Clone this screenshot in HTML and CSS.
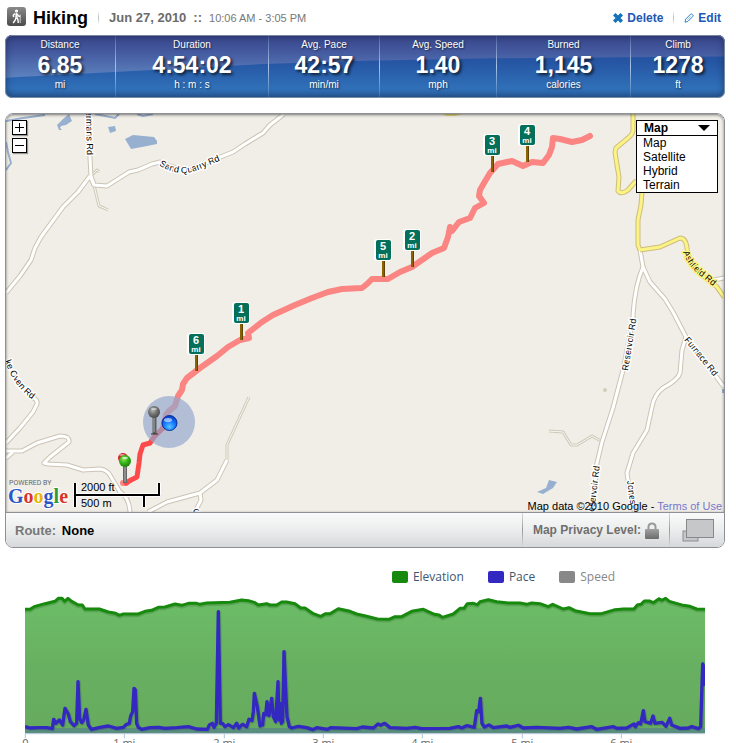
FILE: index.html
```html
<!DOCTYPE html>
<html lang="en">
<head>
<meta charset="utf-8">
<meta name="viewport" content="width=device-width, initial-scale=1">
<title>Hiking - Jun 27, 2010</title>
<link rel="stylesheet" href="styles.css">
</head>
<body>
<main class="page">
  <header class="header">
    <svg class="sport-icon" viewBox="0 0 19 19" aria-hidden="true">
      <defs><linearGradient id="sport" x1="0" y1="0" x2="0" y2="1"><stop offset="0" stop-color="#8a8a8a"/><stop offset="1" stop-color="#4b4b4d"/></linearGradient></defs>
      <rect width="19" height="19" rx="3" fill="url(#sport)"/>
      <circle cx="9.5" cy="4" r="1.6" fill="#fff"/>
      <path d="M8.6 6 L10.4 6 L10.6 10.5 L8.3 10.8 Z" fill="#fff"/>
      <path d="M8 6.6 L6.3 8.2 L6.6 10.2" fill="none" stroke="#fff" stroke-width="1.5"/>
      <path d="M9 10.5 L8.3 13 L6.2 16 M10 10.2 L11 13 L11.3 16 M10.3 7 L11.4 9 L13.2 9.2" fill="none" stroke="#fff" stroke-width="1.4"/>
      <path d="M13.2 7.5 L13.2 16" stroke="#fff" stroke-width=".7"/>
    </svg>
    <h1 class="title">Hiking</h1>
    <span class="divider"></span>
    <span class="date">Jun 27, 2010</span>
    <span class="dots">::</span>
    <span class="time">10:06 AM - 3:05 PM</span>
    <nav class="actions">
      <a class="action" href="#delete">
        <svg class="action-icon" viewBox="0 0 10 10" aria-hidden="true"><path d="M2.5 2.5 L7.5 7.5 M7.5 2.5 L2.5 7.5" stroke="#1673b9" stroke-width="3.6" stroke-linecap="square"/></svg>
        Delete
      </a>
      <span class="divider"></span>
      <a class="action" href="#edit">
        <svg class="action-icon" viewBox="0 0 10 10" aria-hidden="true"><path d="M1 9.2 L1.6 6.2 L6.7 1.1 Q7.4 .5 8.2 1.3 L8.9 2 Q9.5 2.8 8.9 3.4 L3.8 8.5 Z" fill="#fff" stroke="#2a83c4"/><path d="M3.4 6.8 L6.9 3.3" stroke="#8fc0e2"/></svg>
        Edit
      </a>
    </nav>
  </header>

  <dl class="stats">
    <div class="stat"><dt>Distance</dt><dd class="value">6.85</dd><dd>mi</dd></div>
    <div class="stat"><dt>Duration</dt><dd class="value">4:54:02</dd><dd>h : m : s</dd></div>
    <div class="stat"><dt>Avg. Pace</dt><dd class="value">42:57</dd><dd>min/mi</dd></div>
    <div class="stat"><dt>Avg. Speed</dt><dd class="value">1.40</dd><dd>mph</dd></div>
    <div class="stat"><dt>Burned</dt><dd class="value">1,145</dd><dd>calories</dd></div>
    <div class="stat"><dt>Climb</dt><dd class="value">1278</dd><dd>ft</dd></div>
  </dl>

  <section class="map-card">
    <div class="map">
      <svg class="map-canvas" viewBox="6 114 718 398" preserveAspectRatio="xMidYMid slice" role="img" aria-label="Route map">
        <defs>
          <radialGradient id="blue" cx=".5" cy=".75" r=".75"><stop offset="0" stop-color="#55c8ff"/><stop offset=".5" stop-color="#1878ff"/><stop offset="1" stop-color="#0638c0"/></radialGradient>
          <radialGradient id="green" cx=".4" cy=".35" r=".7"><stop offset="0" stop-color="#8fe25c"/><stop offset=".5" stop-color="#35b516"/><stop offset="1" stop-color="#1c7a0c"/></radialGradient>
          <radialGradient id="gray" cx=".4" cy=".35" r=".7"><stop offset="0" stop-color="#b5b5b5"/><stop offset=".5" stop-color="#717171"/><stop offset="1" stop-color="#484848"/></radialGradient>
          <g id="sign">
            <rect x="-1" y="-16" width="3" height="16" fill="#8a6400"/><path d="M1.5 -16 V0" stroke="#5e4400"/>
            <rect x="-9" y="-38" width="18" height="22" rx="3" fill="#fff"/>
            <rect x="-7" y="-37" width="15" height="20" rx="2" fill="#04705a"/>
          </g>
          <path id="r-hermans" d="M88 114 L90 158 L91 176 L94 185"/>
          <path id="r-sand" d="M90 176 L94 185 L107 186 L118 179 L129 172 L138 170 L152 164 L160 162 Q173 168 185 170 Q200 166 218 158 L233 152 L245 144 L263 133 L270 125 L284 114"/>
          <path id="r-west" d="M6 293 L20 276 L31 260 L35 248 L41 237 L63 207 L78 192 L90 176"/>
          <path id="r-yellow" d="M633 114 V130 Q633 134 628 138 L616 148 L615 152 L617 165 L619 177 L618 191 Q621 195 628 190 L635 182 L642 180 L642 192 L641 205 L638 220 L638 245 L640 250"/>
          <path id="r-ashfield" d="M640 250 L660 247 L680 238 Q686 238 687 248 Q689 262 697 271 L717 287 L724 297"/>
          <path id="r-reservoir" d="M640 250 L643 267 Q635 285 633 315 L633 320 L623 370 L613 408 L602 442 L597 463 L592 514"/>
          <path id="r-furnace" d="M643 267 L650 282 L665 299 L673 312 L686 337 L715 375 L724 387"/>
          <path id="r-jones" d="M686 337 L682 350 L680 373 Q678 380 663 388 Q654 395 652 407 L647 430 L633 453 L627 473 L629 487 L635 514"/>
          <path id="r-oven" d="M31 397 Q38 399 37 404 L33 412 L20 428 L6 443"/>
          <path id="r-south" d="M6 451 H22 L37 443 L60 436 Q70 436 69 442 L50 457 L44 463 L48 464 L67 465 L83 470 L100 469 Q108 470 111 477 L120 492 Q130 498 130 514"/>
          <path id="r-south2" d="M6 458 L13 452 M148 512 L167 502 L200 493 L217 480 L227 460 M200 493 L201 500 L196 510"/>
          <path id="t-hermans" d="M86 111 L87 162"/>
          <path id="t-sand" d="M159 165 Q179 178 198 170 L226 158"/>
          <path id="t-ashfield" d="M683 252 Q689 268 702 277 L724 295"/>
          <path id="t-res1" d="M628 371 L637 315"/>
          <path id="t-res2" d="M594 512 L601 456"/>
          <path id="t-furnace" d="M684 340 L719 383"/>
          <path id="t-jones" d="M627 481 L632 516"/>
          <path id="t-oven" d="M5 361 Q14 388 36 402"/>
        </defs>
        <rect x="6" y="114" width="718" height="398" fill="#f1eee8"/>

        <g fill="#98b0cf">
          <path d="M57 125 L63 119 L69 114 L72 121 L66 125 L61 126 L60 128 L62 130 L59 130 Z"/>
          <path d="M108 127 L115 126 L116 131 L110 133 Z"/>
          <path d="M125 139 L133 135 L154 137 L157 141 L157 144 L142 147 L131 149 Z"/>
          <path d="M537 492 L546 488 L549 480 L557 482 L553 488 L543 494 Z"/>
          <path d="M722 389 H724 V393 H722 Z"/>
        </g>
        <g fill="none" stroke="#98b0cf" stroke-width="2">
          <path d="M6 121 L23 118 L45 115 M95 114 L115 118 L119 114 M137 114 L143 116 L153 114 M6 142 L8 152 L11 163 L6 170"/>
        </g>
        <path d="M442 114 L447 116 L455 116 L463 114 Z" fill="#e3d877"/>
        <circle cx="605" cy="390" r="2" fill="#d0cdbd"/>

        <g fill="none" stroke-linejoin="round">
          <g stroke="#cfc9b9" stroke-width="3">
            <path d="M94 185 L97 198 L99 206 L104 208 L108 210 M91 176 L97 170 L99 172 M549 431 L563 432 L571 445 L577 445 L592 436 L601 441 M227 460 L227 445 L249 397"/>
          </g>
          <g stroke="#f8f7f2" stroke-width="1">
            <path d="M94 185 L97 198 L99 206 L104 208 L108 210 M91 176 L97 170 L99 172 M549 431 L563 432 L571 445 L577 445 L592 436 L601 441 M227 460 L227 445 L249 397"/>
          </g>
          <g stroke="#cbc4b3" stroke-width="5">
            <use href="#r-hermans"/><use href="#r-sand"/><use href="#r-west"/><use href="#r-reservoir"/><use href="#r-furnace"/><use href="#r-jones"/><use href="#r-oven"/><use href="#r-south"/><use href="#r-south2"/><path d="M714 280 L724 278"/>
          </g>
          <g stroke="#fff" stroke-width="3">
            <use href="#r-hermans"/><use href="#r-sand"/><use href="#r-west"/><use href="#r-reservoir"/><use href="#r-furnace"/><use href="#r-jones"/><use href="#r-oven"/><use href="#r-south"/><use href="#r-south2"/><path d="M714 280 L724 278"/>
          </g>
          <g stroke="#cdbd7f" stroke-width="5"><use href="#r-yellow"/><use href="#r-ashfield"/></g>
          <g stroke="#fbf484" stroke-width="3"><use href="#r-yellow"/><use href="#r-ashfield"/></g>
        </g>

        <g class="road-label">
          <text><textPath href="#t-hermans">ermans Rd</textPath></text>
          <text><textPath href="#t-sand">Sand Quarry Rd</textPath></text>
          <text class="road-label-yellow"><textPath href="#t-ashfield">Ashfield Rd</textPath></text>
          <text><textPath href="#t-res1">Reservoir Rd</textPath></text>
          <text><textPath href="#t-res2">eservoir Rd</textPath></text>
          <text><textPath href="#t-furnace">Furnace Rd</textPath></text>
          <text><textPath href="#t-jones">Jones</textPath></text>
          <text><textPath href="#t-oven">ke Oven Rd</textPath></text>
          <text x="193" y="515">C</text>
        </g>

        <g fill="none" stroke-linecap="round" stroke-linejoin="round">
          <path d="M163 428 L166 415 L169 411 L175 406 L178 396 L182 390 L183 384 L187 378 L200 368 L217 356 L228 347 L240 340 L249 338 L248 333 L262 322 L273 315 L295 305 L312 298 L328 292 L342 289 L362 288 L367 284 L372 279 L388 279 L400 272 L412 267 L422 260 L432 253 L444 248 L448 237 L450 227 L452 231 L459 222 L470 218 L475 208 L484 203 L479 196 L480 190 L484 183 L490 173 L498 164 L512 161 L523 166 L532 162 L543 163 L549 155 L552 147 L553 138 L560 139 L572 142 L582 140 L590 136" stroke="#fa8583" stroke-width="6"/>
          <path d="M123 483 H126" stroke="#fa8583" stroke-width="6"/>
          <path d="M126 483 L131 480 L137 477 L139 463 L140 454 L143 445 L150 443 L154 437 L163 428" stroke="#fc4a4a" stroke-width="5"/>
        </g>
        <circle cx="169" cy="422" r="26" fill="#92a7cc" fill-opacity=".68"/>
        <path d="M154.500 416 V434" stroke="#5e5e5e" stroke-width="4"/><path d="M154 416 V432" stroke="#aaa" stroke-width="1"/>
        <path d="M151 434 H158" stroke="#333" stroke-width="1"/>
        <circle cx="154" cy="412" r="6" fill="url(#gray)"/><ellipse cx="154" cy="409" rx="3" ry="1" fill="#fff" opacity=".5"/>
        <circle cx="169.500" cy="423" r="7.500" fill="url(#blue)" stroke="#082e9c"/><ellipse cx="168" cy="420" rx="4" ry="2" fill="#fff" opacity=".55"/>
        <circle cx="123" cy="458" r="5" fill="#d2232a"/><ellipse cx="122" cy="455" rx="3" ry="1" fill="#fff" opacity=".5"/>
        <path d="M125 464 V483" stroke="#666" stroke-width="4"/><path d="M125 466 V482" stroke="#b5b5b5" stroke-width="1"/>
        <circle cx="125" cy="461" r="6" fill="url(#green)"/><ellipse cx="125" cy="458" rx="3" ry="1" fill="#fff" opacity=".7"/>

        <g class="sign">
          <g transform="translate(196 371)"><use href="#sign"/><text class="num" y="-27">6</text><text y="-19">mi</text></g>
          <g transform="translate(241 340)"><use href="#sign"/><text class="num" y="-27">1</text><text y="-19">mi</text></g>
          <g transform="translate(383 277)"><use href="#sign"/><text class="num" y="-27">5</text><text y="-19">mi</text></g>
          <g transform="translate(412 267)"><use href="#sign"/><text class="num" y="-27">2</text><text y="-19">mi</text></g>
          <g transform="translate(492 172)"><use href="#sign"/><text class="num" y="-27">3</text><text y="-19">mi</text></g>
          <g transform="translate(527 162)"><use href="#sign"/><text class="num" y="-27">4</text><text y="-19">mi</text></g>
        </g>

        <text class="powered" x="9" y="485">POWERED BY</text>
        <text class="google" x="8" y="503"><tspan fill="#2a56c6">G</tspan><tspan fill="#d9342b">o</tspan><tspan fill="#e8b500">o</tspan><tspan fill="#2a56c6">g</tspan><tspan fill="#2f9a3c">l</tspan><tspan fill="#d9342b">e</tspan></text>
        <path d="M75 483 V507 M75 495 H160 M159 483 V495 M144 495 V507" fill="none" stroke="#fff" stroke-width="4"/>
        <path d="M75 483 V507 M75 495 H160 M159 483 V495 M144 495 V507" fill="none" stroke="#000" stroke-width="2"/>
        <text class="scale" x="81" y="491">2000 ft</text>
        <text class="scale" x="81" y="507">500 m</text>
      </svg>
      <div class="zoom">
        <button class="zoom-button" type="button" aria-label="Zoom in"><svg viewBox="0 0 13 13"><path d="M2 6.500 H11 M6.500 2 V11" stroke="#000"/></svg></button>
        <button class="zoom-button" type="button" aria-label="Zoom out"><svg viewBox="0 0 13 13"><path d="M2 6.500 H11" stroke="#000"/></svg></button>
      </div>
      <div class="map-type">
        <button class="map-type-current" type="button" aria-expanded="true">Map<span class="caret"></span></button>
        <div class="map-type-list">
          <button type="button">Map</button>
          <button type="button">Satellite</button>
          <button type="button">Hybrid</button>
          <button type="button">Terrain</button>
        </div>
      </div>
      <p class="attribution">Map data ©2010 Google - <a href="#terms">Terms of Use</a></p>
    </div>
    <footer class="map-footer">
      <p class="route"><span class="muted">Route:</span> <strong>None</strong></p>
      <div class="privacy">
        <span>Map Privacy Level:</span>
        <svg class="lock" viewBox="0 0 14 17" aria-hidden="true">
          <defs><linearGradient id="lock" x1="0" y1="0" x2="0" y2="1"><stop offset="0" stop-color="#a0a0a0"/><stop offset="1" stop-color="#6c6c6c"/></linearGradient></defs>
          <path d="M3.500 8 V5 Q3.500 1.500 7 1.500 Q10.500 1.500 10.500 5 V8" fill="none" stroke="#999" stroke-width="2"/>
          <rect y="7" width="14" height="10" rx="1" fill="url(#lock)"/>
        </svg>
      </div>
      <button class="resize" type="button" aria-label="Enlarge map">
        <svg viewBox="0 0 32 23"><rect x="1" y="12" width="15" height="10" fill="#c6c7c9" stroke="#8b8d90"/><rect x="4.500" y=".5" width="27" height="18" fill="#c6c7c9" stroke="#85878a"/></svg>
      </button>
    </footer>
  </section>

  <section class="chart">
    <div class="legend">
      <button type="button"><span class="swatch elevation"></span>Elevation</button>
      <button type="button"><span class="swatch pace"></span>Pace</button>
      <button type="button" class="off"><span class="swatch speed"></span>Speed</button>
    </div>
    <svg class="plot" viewBox="15 90 2160 480" role="img" aria-label="Elevation and pace by distance">
      <defs>
        <linearGradient id="hill" x1="0" y1="0" x2="0" y2="1"><stop offset="0" stop-color="#6cbd67"/><stop offset=".5" stop-color="#68b061"/><stop offset="1" stop-color="#66ab5e"/></linearGradient>
        <clipPath id="plot-area"><rect x="75" y="90" width="2040" height="430"/></clipPath>
        <path id="elev" d="M75 148 L90 148 105 139 135 131 165 124 175 115 186 115 194 124 204 115 215 124 235 135 247 135 255 147 298 147 325 156 347 160 358 166 370 162 415 162 435 154 455 151 475 142 495 141 525 132 545 136 565 130 590 130 600 133 620 129 690 127 725 120 745 122 765 128 775 135 800 131 810 135 830 135 845 126 860 126 885 131 902 144 915 144 940 161 962 169 977 161 990 161 1015 146 1050 154 1070 162 1100 169 1132 177 1167 178 1185 170 1205 170 1235 154 1270 148 1303 163 1317 165 1327 172 1360 162 1380 145 1392 145 1402 131 1420 130 1432 134 1440 125 1465 119 1490 125 1525 129 1560 129 1580 133 1595 129 1620 131 1645 140 1658 133 1690 147 1707 143 1725 152 1770 161 1805 161 1845 149 1870 147 1902 147 1912 135 1923 133 1933 123 1948 123 1960 128 1977 116 1985 121 1997 115 2008 124 2050 136 2070 139 2090 147 2115 148"/>
        <path id="pace" d="M75 500 L90 504 115 503 140 503 157 506 161 478 168 490 178 480 188 495 195 445 205 462 211 485 222 497 230 490 234 365 239 475 245 488 251 480 258 448 265 495 274 508 300 502 325 498 350 505 370 502 378 494 388 490 392 468 398 455 402 385 406 390 410 490 415 502 425 508 450 503 475 502 495 505 530 503 565 500 590 507 622 508 628 495 637 490 642 502 649 490 655 155 661 490 667 490 675 500 685 494 700 503 710 490 716 504 727 493 740 500 747 478 756 482 760 455 763 400 772 440 780 498 788 495 791 460 797 465 801 425 807 467 815 415 820 470 827 485 834 365 837 480 840 430 844 490 848 485 852 275 858 410 861 470 868 500 875 504 895 499 920 503 938 509 950 503 982 508 992 503 1070 506 1087 501 1120 504 1134 492 1142 496 1154 490 1170 503 1220 505 1245 502 1265 506 1350 505 1375 500 1385 504 1400 497 1423 502 1430 452 1436 455 1441 415 1446 490 1453 501 1467 495 1480 503 1520 498 1530 502 1555 496 1570 504 1610 502 1680 505 1705 502 1730 507 1775 500 1790 508 1840 500 1850 505 1880 504 1902 492 1906 500 1915 488 1922 492 1930 452 1935 485 1952 490 1959 468 1965 490 1986 487 1998 499 2009 475 2015 495 2040 505 2065 504 2075 500 2095 506 2102 500 2108 312 2114 325 2115 378"/>
      </defs>
      <g clip-path="url(#plot-area)" stroke-linejoin="round">
        <path d="M75 148 L90 148 105 139 135 131 165 124 175 115 186 115 194 124 204 115 215 124 235 135 247 135 255 147 298 147 325 156 347 160 358 166 370 162 415 162 435 154 455 151 475 142 495 141 525 132 545 136 565 130 590 130 600 133 620 129 690 127 725 120 745 122 765 128 775 135 800 131 810 135 830 135 845 126 860 126 885 131 902 144 915 144 940 161 962 169 977 161 990 161 1015 146 1050 154 1070 162 1100 169 1132 177 1167 178 1185 170 1205 170 1235 154 1270 148 1303 163 1317 165 1327 172 1360 162 1380 145 1392 145 1402 131 1420 130 1432 134 1440 125 1465 119 1490 125 1525 129 1560 129 1580 133 1595 129 1620 131 1645 140 1658 133 1690 147 1707 143 1725 152 1770 161 1805 161 1845 149 1870 147 1902 147 1912 135 1923 133 1933 123 1948 123 1960 128 1977 116 1985 121 1997 115 2008 124 2050 136 2070 139 2090 147 2115 148 V520 H75 Z" fill="url(#hill)"/>
        <rect x="75" y="504" width="2040" height="16" fill="#5a8f80"/>
        <g fill="none">
          <use href="#elev" stroke="#1b4d14" stroke-opacity=".2" stroke-width="13" y="3"/>
          <use href="#elev" stroke="#178a0e" stroke-width="9"/>
          <use href="#pace" stroke="#1c2c50" stroke-opacity=".2" stroke-width="13" x="2" y="2"/>
          <use href="#pace" stroke="#3329c0" stroke-width="10"/>
        </g>
      </g>
      <path d="M75 521 H2115 M76 521 V535 M373 521 V535 M673 521 V535 M970 521 V535 M1267 521 V535 M1567 521 V535 M1864 521 V535" fill="none" stroke="#b3c4d9" stroke-width="3"/>
      <g class="axis">
        <text x="76" y="562">0</text>
        <text x="373" y="562">1 mi</text>
        <text x="673" y="562">2 mi</text>
        <text x="970" y="562">3 mi</text>
        <text x="1267" y="562">4 mi</text>
        <text x="1567" y="562">5 mi</text>
        <text x="1864" y="562">6 mi</text>
      </g>
    </svg>
  </section>
</main>
</body>
</html>
```

FILE: styles.css
```css
* { box-sizing: border-box; }

body {
  margin: 0;
  height: 100vh;
  overflow: hidden;
  background: #fff;
  color: #000;
  font-family: "Liberation Sans", Arial, sans-serif;
  font-size: 12px;
}

h1, p, dl, dd { margin: 0; }

button {
  margin: 0;
  padding: 0;
  border: 0;
  background: none;
  color: inherit;
  font: inherit;
  cursor: pointer;
}

svg { display: block; }

.page { padding: 0 11px 0 5px; }

/* Header */
.header {
  display: flex;
  align-items: center;
  height: 35px;
  padding: 0 4px 0 2px;
}

.sport-icon { width: 19px; height: 19px; margin: 0 7px 2px 0; }
.title { font-size: 18px; line-height: 20px; }

.divider {
  width: 1px;
  height: 14px;
  margin: 0 10px;
  background: linear-gradient(#fff, #bbb, #fff);
}

.date, .dots { color: #6b6b6b; font-size: 13px; font-weight: bold; }
.dots { margin: 0 7px; }
.time { color: #777; font-size: 11px; }
.actions { display: flex; align-items: center; margin-left: auto; }

.action {
  display: flex;
  align-items: center;
  gap: 4px;
  color: #2058b4;
  font-weight: bold;
  text-decoration: none;
}

.action-icon { width: 10px; height: 10px; }

/* Stats bar */
.stats {
  position: relative;
  display: grid;
  grid-template-columns: 110fr 153fr 111fr 117fr 134fr 95fr;
  overflow: hidden;
  border-radius: 7px;
  background: linear-gradient(#1f4a97, #2554a2 40%, #3070b8 85%, #2b62a4);
  color: #fff;
  text-align: center;
}

.stats::before,
.stats::after {
  content: "";
  position: absolute;
  inset: 0;
}

.stats::before {
  background: linear-gradient(#38458a, #43589e 25%, #5c80bd 65%);
  clip-path: polygon(0 0, 100% 0, 100% 34%, 68% 37%, 50% 41%, 36% 46%, 0 68%);
}

.stats::after {
  border-radius: 7px;
  border: 1px solid rgba(140, 150, 165, .8);
  box-shadow: inset 0 0 7px rgba(20, 30, 60, .6);
  pointer-events: none;
}

.stat {
  position: relative;
  padding: 4px 0 7px;
  font-size: 10px;
  line-height: 12px;
  text-shadow: 1px 1px 2px rgba(0, 0, 0, .6);
}

.stat + .stat {
  border-left: 1px solid;
  border-image: linear-gradient(#4a62a5, #a9c3e6 50%, #3f78bd) 1;
}

.stat .value {
  font-size: 23px;
  font-weight: bold;
  line-height: 28px;
  text-shadow: 2px 2px 3px rgba(0, 0, 0, .7);
}

/* Map */
.map-card {
  margin-top: 15px;
  overflow: hidden;
  border: 1px solid #8d9094;
  border-radius: 8px;
}

.map { position: relative; }
.map-canvas { width: 100%; height: 398px; }

.map::after {
  content: "";
  position: absolute;
  inset: 0;
  border-radius: 7px 7px 0 0;
  box-shadow: inset 0 1px 3px rgba(0, 0, 0, .5);
  pointer-events: none;
}

.road-label {
  font-size: 9px;
  fill: #000;
  stroke: #fff;
  stroke-width: 3px;
  stroke-linejoin: round;
  paint-order: stroke;
}

.road-label-yellow { stroke: #fbf484; }

.sign text {
  fill: #fff;
  font-size: 8px;
  font-weight: bold;
  text-anchor: middle;
}

.sign .num { font-size: 11px; }

.powered { fill: #666; font-family: Roboto, sans-serif; font-size: 7px; }

.google {
  font-family: "Liberation Serif", serif;
  font-size: 20px;
  font-weight: bold;
  stroke: #fff;
  stroke-width: 2px;
  paint-order: stroke;
}

.scale { font-size: 11px; stroke: #f1eee8; stroke-width: 2px; paint-order: stroke; }

.zoom {
  position: absolute;
  top: 6px;
  left: 6px;
  display: grid;
  gap: 3px;
}

.zoom-button {
  width: 15px;
  height: 15px;
  border: 1px solid #000;
  background: #fff;
  box-shadow: 1px 1px 1px #999;
}

.map-type {
  position: absolute;
  top: 6px;
  right: 6px;
  width: 82px;
  border: 1px solid #000;
  background: #fff;
}

.map-type-current {
  display: flex;
  align-items: center;
  justify-content: space-between;
  width: 100%;
  height: 15px;
  padding: 0 7px;
  border-bottom: 1px solid #000;
  font-weight: bold;
}

.caret {
  border: 6px solid transparent;
  border-top-color: #000;
  border-bottom: 0;
}

.map-type-list { display: grid; }

.map-type-list button {
  padding-left: 6px;
  line-height: 14px;
  text-align: left;
}

.attribution {
  position: absolute;
  right: 2px;
  bottom: 0;
  font-size: 11px;
  line-height: 12px;
}

.attribution a { color: #7777cc; text-decoration: none; }

.map-footer {
  display: flex;
  align-items: center;
  height: 35px;
  border-top: 1px solid #8d9094;
  background: linear-gradient(#fafafa, #eceded 50%, #d6d8db);
}

.route { flex: 1; padding-left: 9px; font-size: 13px; }
.route strong { margin-left: 2px; }
.muted { color: #777; font-weight: bold; }

.privacy,
.resize {
  display: flex;
  align-items: center;
  height: 34px;
  border-left: 1px solid;
  border-image: linear-gradient(#ddd, #999, #ddd) 1;
}

.privacy { gap: 4px; padding: 0 10px; color: #6f6f6f; font-weight: bold; }
.lock { width: 14px; height: 17px; }
.resize { padding: 0 10px 0 12px; }
.resize svg { width: 32px; height: 23px; }

/* Chart */
.legend {
  display: flex;
  justify-content: flex-end;
  gap: 24px;
  height: 42px;
  padding: 20px 110px 0 0;
  color: #3e576f;
  font-family: "Open Sans", sans-serif;
  font-size: 12px;
  line-height: 18px;
}

.legend button { display: flex; align-items: center; gap: 5px; height: 18px; }
.legend .off { color: #888; }
.swatch { width: 16px; height: 12px; border-radius: 2px; }
.elevation { background: #178a0e; }
.pace { background: #3329c0; }
.speed { background: #888; }
.plot { width: 100%; height: auto; }

.axis {
  fill: #666;
  font-family: "Open Sans", sans-serif;
  font-size: 33px;
  text-anchor: middle;
}
```
